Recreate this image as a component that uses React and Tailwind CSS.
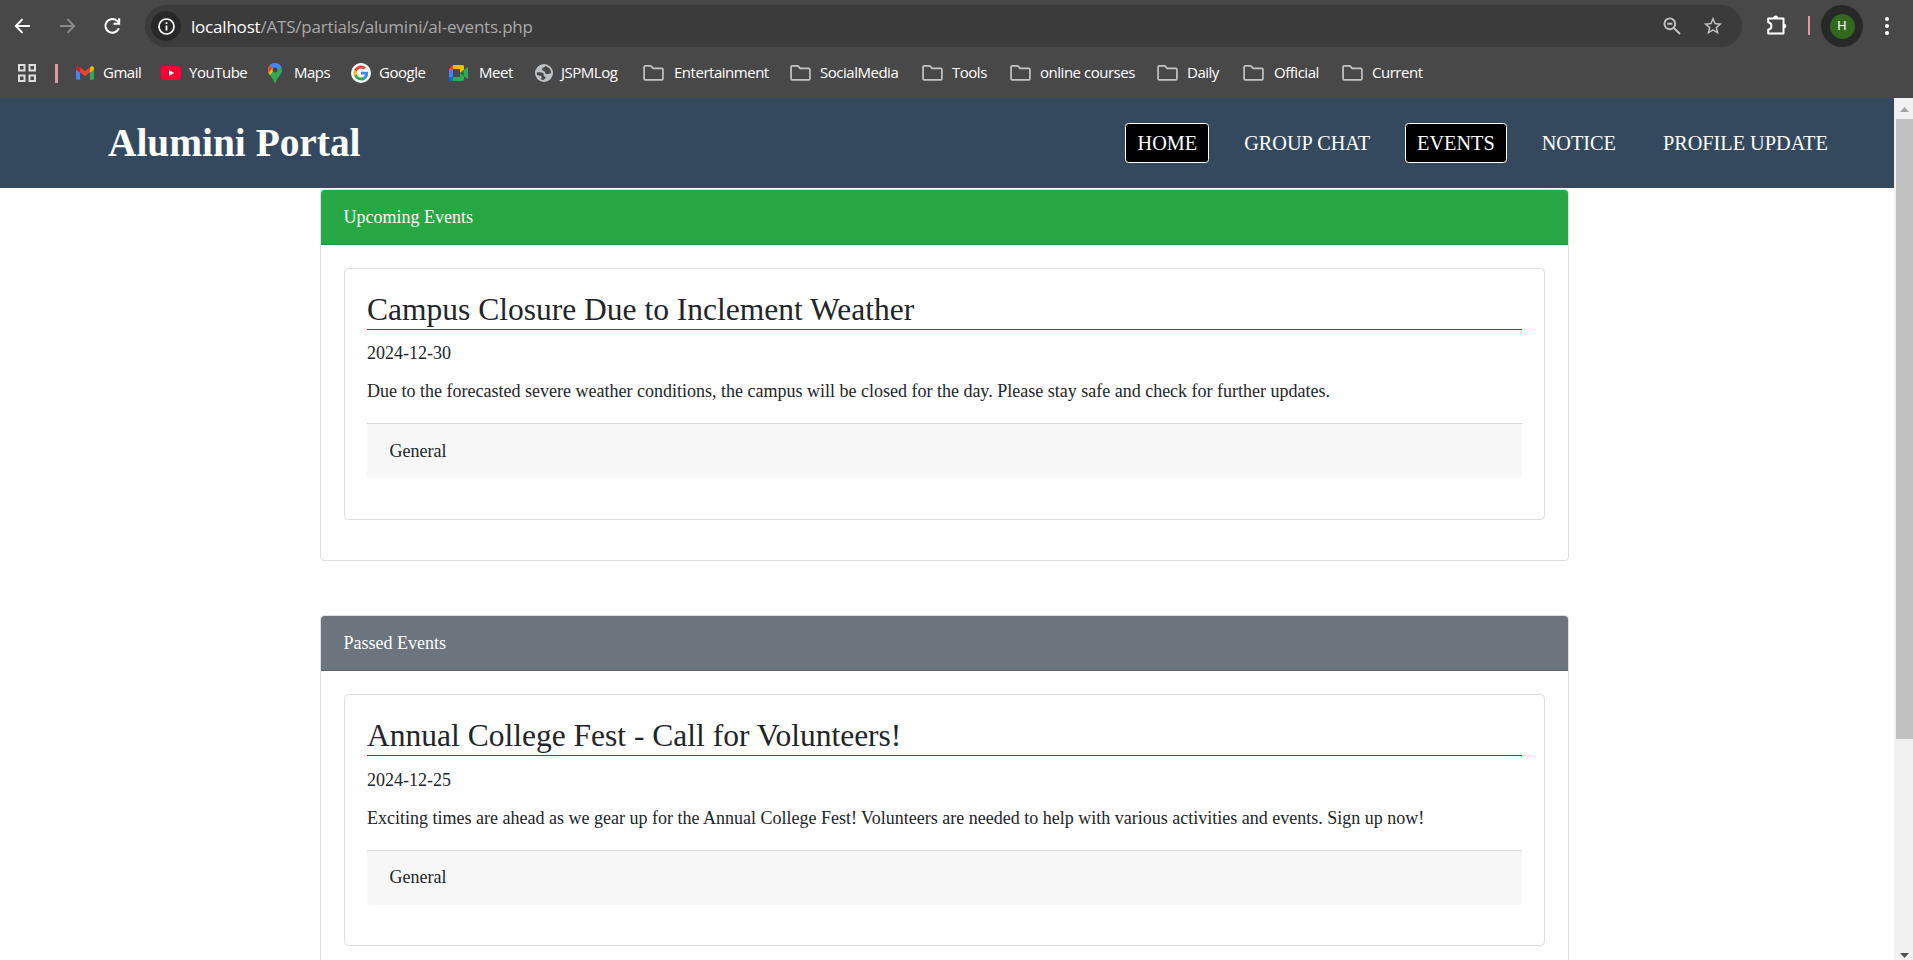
const ui = "font-['Open_Sans',sans-serif]";

function Folder() {
  return (
    <svg className="size-[22px] shrink-0" viewBox="0 0 22 22" fill="none" stroke="#c3c3c3" strokeWidth="1.7" strokeLinejoin="round">
      <path d="M2 3.800h5.800l2.400 2.600h8.600a1.100 1.100 0 0 1 1.100 1.100v9.200a1.100 1.100 0 0 1-1.100 1.100H2.200a1.100 1.100 0 0 1-1.100-1.100V4.900A1.100 1.100 0 0 1 2.200 3.800z" />
    </svg>
  );
}
function Gmail() {
  return (
    <svg className="size-[18px] shrink-0" viewBox="0 0 18 18">
      <path fill="#4285f4" d="M0 5v9.500a1.300 1.300 0 0 0 1.300 1.300H4.100V7.900z" />
      <path fill="#34a853" d="M18 5v9.500a1.300 1.300 0 0 1-1.300 1.300h-2.800V7.900z" />
      <path fill="#fbbc04" d="M13.900 3.500v5L18 5.500V4.200c0-1.800-2-2.500-3.200-1.500z" />
      <path fill="#c5221f" d="M4.100 3.500v5L0 5.500V4.200c0-1.800 2-2.500 3.200-1.500z" />
      <path fill="#ea4335" d="M4.100 3.400 9 7.100l4.900-3.700v5L9 12.200 4.100 8.400z" />
    </svg>
  );
}
function YouTube() {
  return (
    <svg className="h-[14px] w-5 shrink-0" viewBox="0 0 20 14">
      <rect width="20" height="14" rx="3.200" fill="#ff0033" />
      <path fill="#fff" d="M8 4v6l5.200-3z" />
    </svg>
  );
}
function Maps() {
  return (
    <svg className="h-[20px] w-[14px] shrink-0" viewBox="0 0 14 20">
      <clipPath id="pin"><path d="M7 0a7 7 0 0 0-7 7c0 2.300.9 3.900 2.300 5.700C4 14.800 5.600 17 6.200 19.200c.3 1 1.300 1 1.600 0 .6-2.200 2.200-4.400 3.900-6.500C13.100 10.900 14 9.300 14 7a7 7 0 0 0-7-7z" /></clipPath>
      <g clipPath="url(#pin)">
        <path fill="#34a853" d="M0 0h14v20H0z" />
        <path fill="#fbbc04" d="M0 14.500 11 1.500 0 3z" />
        <path fill="#ea4335" d="M0 0h4l1 5-5 5.500z" />
        <path fill="#4285f4" d="M1.600 2.400 5 5.300 8.800 7 14 4V0H3z" />
      </g>
      <circle cx="7" cy="7" r="2.500" fill="#474747" />
    </svg>
  );
}
function Google() {
  return (
    <svg className="size-5 shrink-0" viewBox="0 0 20 20">
      <circle cx="10" cy="10" r="10" fill="#fff" />
      <g transform="translate(1.840 1.840) scale(.68)">
        <path fill="#4285f4" d="M22.560 12.250c0-.78-.07-1.530-.2-2.250H12v4.260h5.920c-.26 1.370-1.040 2.530-2.210 3.310v2.770h3.570c2.080-1.920 3.280-4.740 3.280-8.090z" />
        <path fill="#34a853" d="M12 23c2.970 0 5.460-.98 7.280-2.660l-3.570-2.770c-.98.66-2.230 1.060-3.710 1.060-2.860 0-5.290-1.930-6.160-4.530H2.180v2.840C3.990 20.530 7.700 23 12 23z" />
        <path fill="#fbbc05" d="M5.840 14.090c-.22-.66-.35-1.360-.35-2.090s.13-1.430.35-2.090V7.070H2.180C1.430 8.550 1 10.220 1 12s.43 3.450 1.180 4.930l3.660-2.840z" />
        <path fill="#ea4335" d="M12 5.380c1.620 0 3.060.56 4.210 1.640l3.150-3.150C17.450 2.090 14.970 1 12 1 7.700 1 3.990 3.470 2.180 7.070l3.660 2.840c.87-2.600 3.300-4.530 6.160-4.530z" />
      </g>
    </svg>
  );
}
function Meet() {
  return (
    <svg className="h-4 w-[19px] shrink-0" viewBox="0 0 19 16">
      <path fill="#ea4335" d="M0 4 4 0v4z" />
      <path fill="#fbbc04" d="M4 0h9.500A1.500 1.500 0 0 1 15 1.500V5l-4 3V4H4z" />
      <path fill="#4285f4" d="M0 4h4v8H0z" />
      <path fill="#1967d2" d="M0 12h4v4H1.500A1.500 1.500 0 0 1 0 14.500z" />
      <path fill="#34a853" d="M4 16v-4h7V8l4 3v3.500a1.500 1.500 0 0 1-1.500 1.500z" />
      <path fill="#188038" d="M11 8l4-3.300V11z" />
      <path fill="#34a853" d="m15 4.700 3-2.500c.4-.3 1 0 1 .5v10.600c0 .5-.6.8-1 .5l-3-2.500z" />
    </svg>
  );
}
function Globe() {
  return (
    <svg className="size-[18px] shrink-0" viewBox="0 0 18 18">
      <circle cx="9" cy="9" r="9" fill="#bdc1c6" />
      <path fill="#484848" d="M10.200 1.900c-.4 1.500-3.200 1.300-3.200 3.400 0 1.500 1.800 1.300 2.600 2.200.9 1 .4 2.200 1.800 2.600 1.500.4 2.400-1 4.700-.8A7.200 7.200 0 0 0 10.200 1.900z" />
      <path fill="#484848" d="M1.800 8.600c2.200-.5 5.400-.3 6.600.8.9.9-.1 2.100.7 2.900.6.600 1.500.4 1.500 1.400 0 1.100-1.400 1-2.200 2.400A7.200 7.200 0 0 1 5.600 15.300c1.200-.9 1.400-2.200.4-3.200-.9-.9-2.500-.6-4-1.200z" />
    </svg>
  );
}

const bookmarks = [
  { t: "Gmail", I: Gmail, c: "w-[85px]", b: "w-[18px] mr-[9px]" },
  { t: "YouTube", I: YouTube, c: "w-[107px]", b: "w-5 mr-2" },
  { t: "Maps", I: Maps, c: "w-[83px]", b: "w-[14px] mr-[12px]" },
  { t: "Google", I: Google, c: "w-[98px]", b: "w-5 mr-2" },
  { t: "Meet", I: Meet, c: "w-[86px]", b: "w-[19px] mr-[11px]" },
  { t: "JSPMLog", I: Globe, c: "w-[108px]", b: "w-[18px] mr-2" },
  { t: "Entertainment", I: Folder, c: "w-[147px]", b: "w-[22px] mr-[9px]" },
  { t: "SocialMedia", I: Folder, c: "w-[132px]", b: "w-[22px] mr-2" },
  { t: "Tools", I: Folder, c: "w-[88px]", b: "w-[22px] mr-2" },
  { t: "online courses", I: Folder, c: "w-[147px]", b: "w-[22px] mr-2" },
  { t: "Daily", I: Folder, c: "w-[86px]", b: "w-[22px] mr-2" },
  { t: "Official", I: Folder, c: "w-[99px]", b: "w-[22px] mr-[9px]" },
  { t: "Current", I: Folder, c: "w-[90px]", b: "w-[22px] mr-2" },
];

function Toolbar() {
  return (
    <div className="flex h-[52px] items-start pl-3">
      <svg className="mt-4 h-5 w-5" viewBox="0 0 20 20" fill="none" stroke="#fff" strokeWidth="1.900"><path d="M18 10H4M10.500 3.200 3.800 10l6.700 6.800" /></svg>
      <svg className="ml-6 mt-4 h-5 w-5" viewBox="0 0 20 20" fill="none" stroke="#8b8b8b" strokeWidth="1.900"><path d="M4 10h14M11.500 3.200l6.700 6.800-6.700 6.800" /></svg>
      <svg className="ml-[25px] mt-[15px] size-[22px]" viewBox="0 0 22 22" fill="none" stroke="#fff" strokeWidth="2"><path d="M17.800 13.300a6.900 6.900 0 1 1-1.600-7.400l2 2" /><path d="M18.200 3.200v5.500h-5.700" /></svg>
      <div className="ml-[22px] mt-[5px] flex h-[42px] w-[1597px] items-center rounded-full bg-[#3b3b3b] pl-[6px] pr-[18px]">
        <div className="grid size-[30px] place-items-center rounded-full bg-[#282828]">
          <svg className="size-[17px]" viewBox="0 0 17 17" fill="none" stroke="#fff"><circle cx="8.500" cy="8.500" r="7.500" strokeWidth="1.700" /><path d="M8.500 7.400v5M8.500 4.200v1.900" strokeWidth="1.800" /></svg>
        </div>
        <p className={`${ui} ml-[10px] grow whitespace-nowrap pt-px text-[17px] tracking-[-0.200px] text-[#a9a9a9]`}><span className="text-white">localhost</span>/ATS/partials/alumini/al-events.php</p>
        <svg className="size-[18px]" viewBox="0 0 18 18" fill="none" stroke="#c3c3c3" strokeWidth="1.900"><circle cx="6.800" cy="6.800" r="5.400" /><path d="m11 11 6 6M4.200 6.800h5.200" /></svg>
        <svg className="ml-[21px] size-[22px]" viewBox="0 0 24 24" fill="#c3c3c3"><path d="m22 9.240-7.190-.62L12 2 9.190 8.630 2 9.240l5.460 4.730L5.820 21 12 17.270 18.180 21l-1.630-7.030zM12 15.400l-3.760 2.270 1-4.280-3.320-2.880 4.380-.38L12 6.100l1.710 4.040 4.380.38-3.320 2.880 1 4.280z" /></svg>
      </div>
      <svg className="ml-[24px] mt-[14px] size-[22px]" viewBox="0 0 22 22" fill="none" stroke="#fff" strokeWidth="2"><path d="M2.200 4.500H17.500V19.500H2.200V15.800c2-.4 3.200-1.800 3.200-3.800S4.200 8.600 2.200 8.200z" strokeLinejoin="round" /><path d="M7.200 4a2.500 2.500 0 0 1 5 0zM18 9.700a2.400 2.400 0 0 1 0 4.800z" fill="#fff" stroke="none" /></svg>
      <div className="ml-[20px] mt-4 h-[19px] w-0.5 bg-[#dd9aa4]" />
      <div className="ml-[11px] mt-[5px] grid size-[42px] place-items-center rounded-full bg-[#282828]">
        <div className="grid size-[25px] place-items-center rounded-full bg-[#33691e] font-[Roboto,sans-serif] text-[13px] text-white">H</div>
      </div>
      <svg className="ml-[22px] mt-4 h-5 w-1" viewBox="0 0 4 20" fill="#fff"><circle cx="2" cy="3" r="2" /><circle cx="2" cy="10" r="2" /><circle cx="2" cy="17" r="2" /></svg>
    </div>
  );
}

function Bookmarks() {
  return (
    <div className="flex h-[42px] items-center pl-[18px]">
      <svg className="size-[18px] shrink-0" viewBox="0 0 18 18" fill="none" stroke="#dedede" strokeWidth="2"><path d="M1 1h5.500v5.500H1zM11.500 1H17v5.500h-5.500zM1 11.500h5.500V17H1zM11.500 11.500H17V17h-5.500z" /></svg>
      <div className="ml-[19px] mr-[18px] h-[19px] w-[3px] bg-[#dd9aa4]" />
      {bookmarks.map(({ t, I, c, b }) => (
        <div key={t} className={`${c} flex shrink-0 items-center`}>
          <span className={`${b} flex shrink-0 justify-center`}><I /></span>
          <span className={`${ui} whitespace-nowrap pb-0.5 text-[15px] tracking-[-0.480px] text-white`}>{t}</span>
        </div>
      ))}
    </div>
  );
}

const links = [["HOME", true], ["GROUP CHAT", false], ["EVENTS", true], ["NOTICE", false], ["PROFILE UPDATE", false]];

function Navbar() {
  return (
    <nav className="flex h-[90px] items-center justify-between bg-[#34495e] pl-[108px] pr-[54px] text-white">
      <h1 className="pt-px text-[39.375px] font-bold leading-[89px]">Alumini Portal</h1>
      <ul className="flex gap-[22.500px]">
        {links.map(([t, on]) => (
          <li key={t} className={`${on ? "border-white bg-black" : "border-transparent"} flex h-10 items-center rounded-[3.400px] border px-[11.250px] pt-px text-[20.250px]`}>{t}</li>
        ))}
      </ul>
    </nav>
  );
}

function EventSection({ heading, tone, title, date, text, tag }) {
  return (
    <section className="mb-[54.120px] w-[1248.750px] rounded-[4.500px] border border-black/[0.125] bg-white">
      <header className={`${tone} rounded-t-[3.500px] border-b border-black/[0.125] px-[22.500px] py-[13.500px] text-white`}>{heading}</header>
      <div className="p-[22.500px]">
        <article className="mb-[18px] rounded-[4.500px] border border-black/[0.125] p-[22.500px]">
          <h3 className="mb-[10.290px] border-b border-[#ff0000] text-[31.500px] leading-[37.800px]">{title}</h3>
          <p className="mb-[11.250px]">{date}</p>
          <p className="mb-[18px]">{text}</p>
          <footer className="mb-[18px] rounded-b-[3.500px] border-t border-black/[0.125] bg-black/[0.03] px-[22.500px] py-[13.500px]">{tag}</footer>
        </article>
      </div>
    </section>
  );
}

function Scrollbar() {
  return (
    <div className="flex w-[19px] flex-col items-end bg-[#f1f1f1]">
      <div className="flex h-[21px] w-[17px] items-center justify-center pt-px">
        <svg className="h-[5px] w-[9px]" viewBox="0 0 9 5" fill="#a3a3a3"><path d="M0 5 4.500 0 9 5z" /></svg>
      </div>
      <div className="h-[620px] w-[17px] bg-[#c1c1c1]" />
      <div className="mt-auto flex h-[10px] w-[17px] items-start justify-center pt-[3px]">
        <svg className="h-[5px] w-[9px]" viewBox="0 0 9 5" fill="#505050"><path d="M0 0h9L4.500 5z" /></svg>
      </div>
    </div>
  );
}

export default function App() {
  return (
    <div className="flex h-[960px] w-[1913px] flex-col overflow-hidden bg-white">
      <div className="h-[98px] shrink-0 bg-[#484848]">
        <Toolbar />
        <Bookmarks />
      </div>
      <div className="flex min-h-0 grow font-['Liberation_Serif',serif] text-[18px] leading-[27px] text-[#212529]">
        <main className="w-[1894px] overflow-hidden">
          <Navbar />
          <div className="pl-[320.100px] pt-px">
            <EventSection heading="Upcoming Events" tone="bg-[#28a745]" title="Campus Closure Due to Inclement Weather" date="2024-12-30" text="Due to the forecasted severe weather conditions, the campus will be closed for the day. Please stay safe and check for further updates." tag="General" />
            <EventSection heading="Passed Events" tone="bg-[#6c757d]" title="Annual College Fest - Call for Volunteers!" date="2024-12-25" text="Exciting times are ahead as we gear up for the Annual College Fest! Volunteers are needed to help with various activities and events. Sign up now!" tag="General" />
          </div>
        </main>
        <Scrollbar />
      </div>
    </div>
  );
}
